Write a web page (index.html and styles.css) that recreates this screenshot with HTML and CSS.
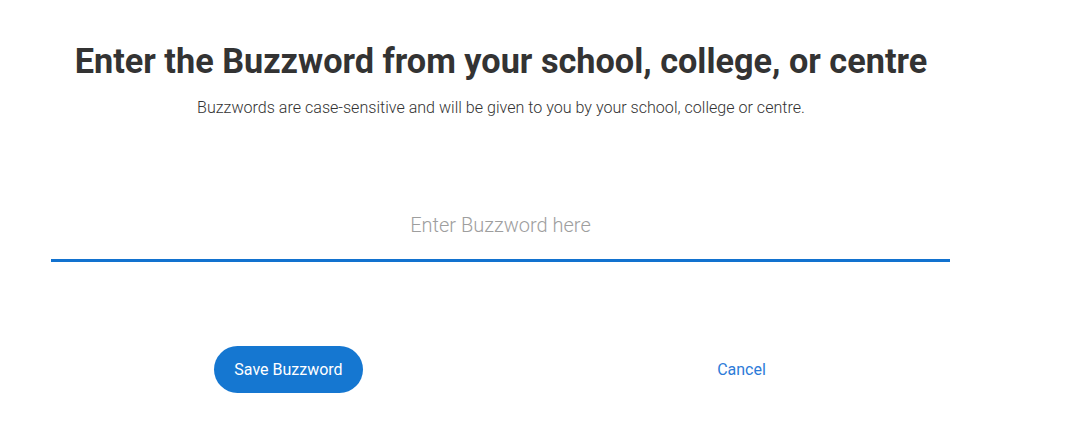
FILE: index.html
```html
<!DOCTYPE html>
<html>
<head>
<meta charset="utf-8">
<link rel="stylesheet" href="styles.css">
</head>
<body>
<main class="page">
  <h1 class="title">Enter the Buzzword from your school, college, or centre</h1>
  <p class="subtitle">Buzzwords are case-sensitive and will be given to you by your school, college or centre.</p>
  <div class="field">
    <input class="input" type="text" placeholder="Enter Buzzword here">
  </div>
  <div class="actions">
    <div class="action"><button class="btn-primary">Save Buzzword</button></div>
    <div class="action"><a class="btn-link" href="#">Cancel</a></div>
  </div>
</main>
</body>
</html>
```

FILE: styles.css
```css
* { box-sizing: border-box; }
html, body { margin: 0; padding: 0; background: #fff; }
body { font-family: Roboto, "Liberation Sans", sans-serif; color: #333; }
.page {
  width: 898px;
  margin-left: 52px;
  padding-top: 39px;
}
.title {
  margin: 0;
  text-align: center;
  font-size: 34.25px;
  font-weight: 700;
  line-height: 44px;
  color: #333;
}
.subtitle {
  margin: 15px 0 0;
  text-align: center;
  font-size: 16.08px;
  font-weight: 300;
  line-height: 20px;
  color: #333;
}
.field {
  margin-top: 83px;
  margin-left: -1px;
}
.input {
  display: block;
  width: 100%;
  border: none;
  border-bottom: 3px solid #1272cf;
  padding: 12px 0 22px;
  font-family: Roboto, "Liberation Sans", sans-serif;
  font-size: 20px;
  font-weight: 300;
  line-height: 24px;
  text-align: center;
  outline: none;
  color: #333;
  background: transparent;
}
.input::placeholder { color: #9e9e9e; }
.actions {
  display: grid;
  grid-template-columns: 1fr 1fr;
  width: 906px;
  margin-left: 10px;
  margin-top: 84px;
}
.action {
  display: flex;
  justify-content: center;
  align-items: center;
}
.btn-primary {
  height: 47px;
  padding: 0 20px;
  border: none;
  border-radius: 24px;
  background: #1577d1;
  color: #fff;
  font-family: Roboto, "Liberation Sans", sans-serif;
  font-size: 16px;
  font-weight: 400;
}
.btn-link {
  color: #2c7bd8;
  text-decoration: none;
  font-size: 16px;
  font-weight: 400;
}
```
